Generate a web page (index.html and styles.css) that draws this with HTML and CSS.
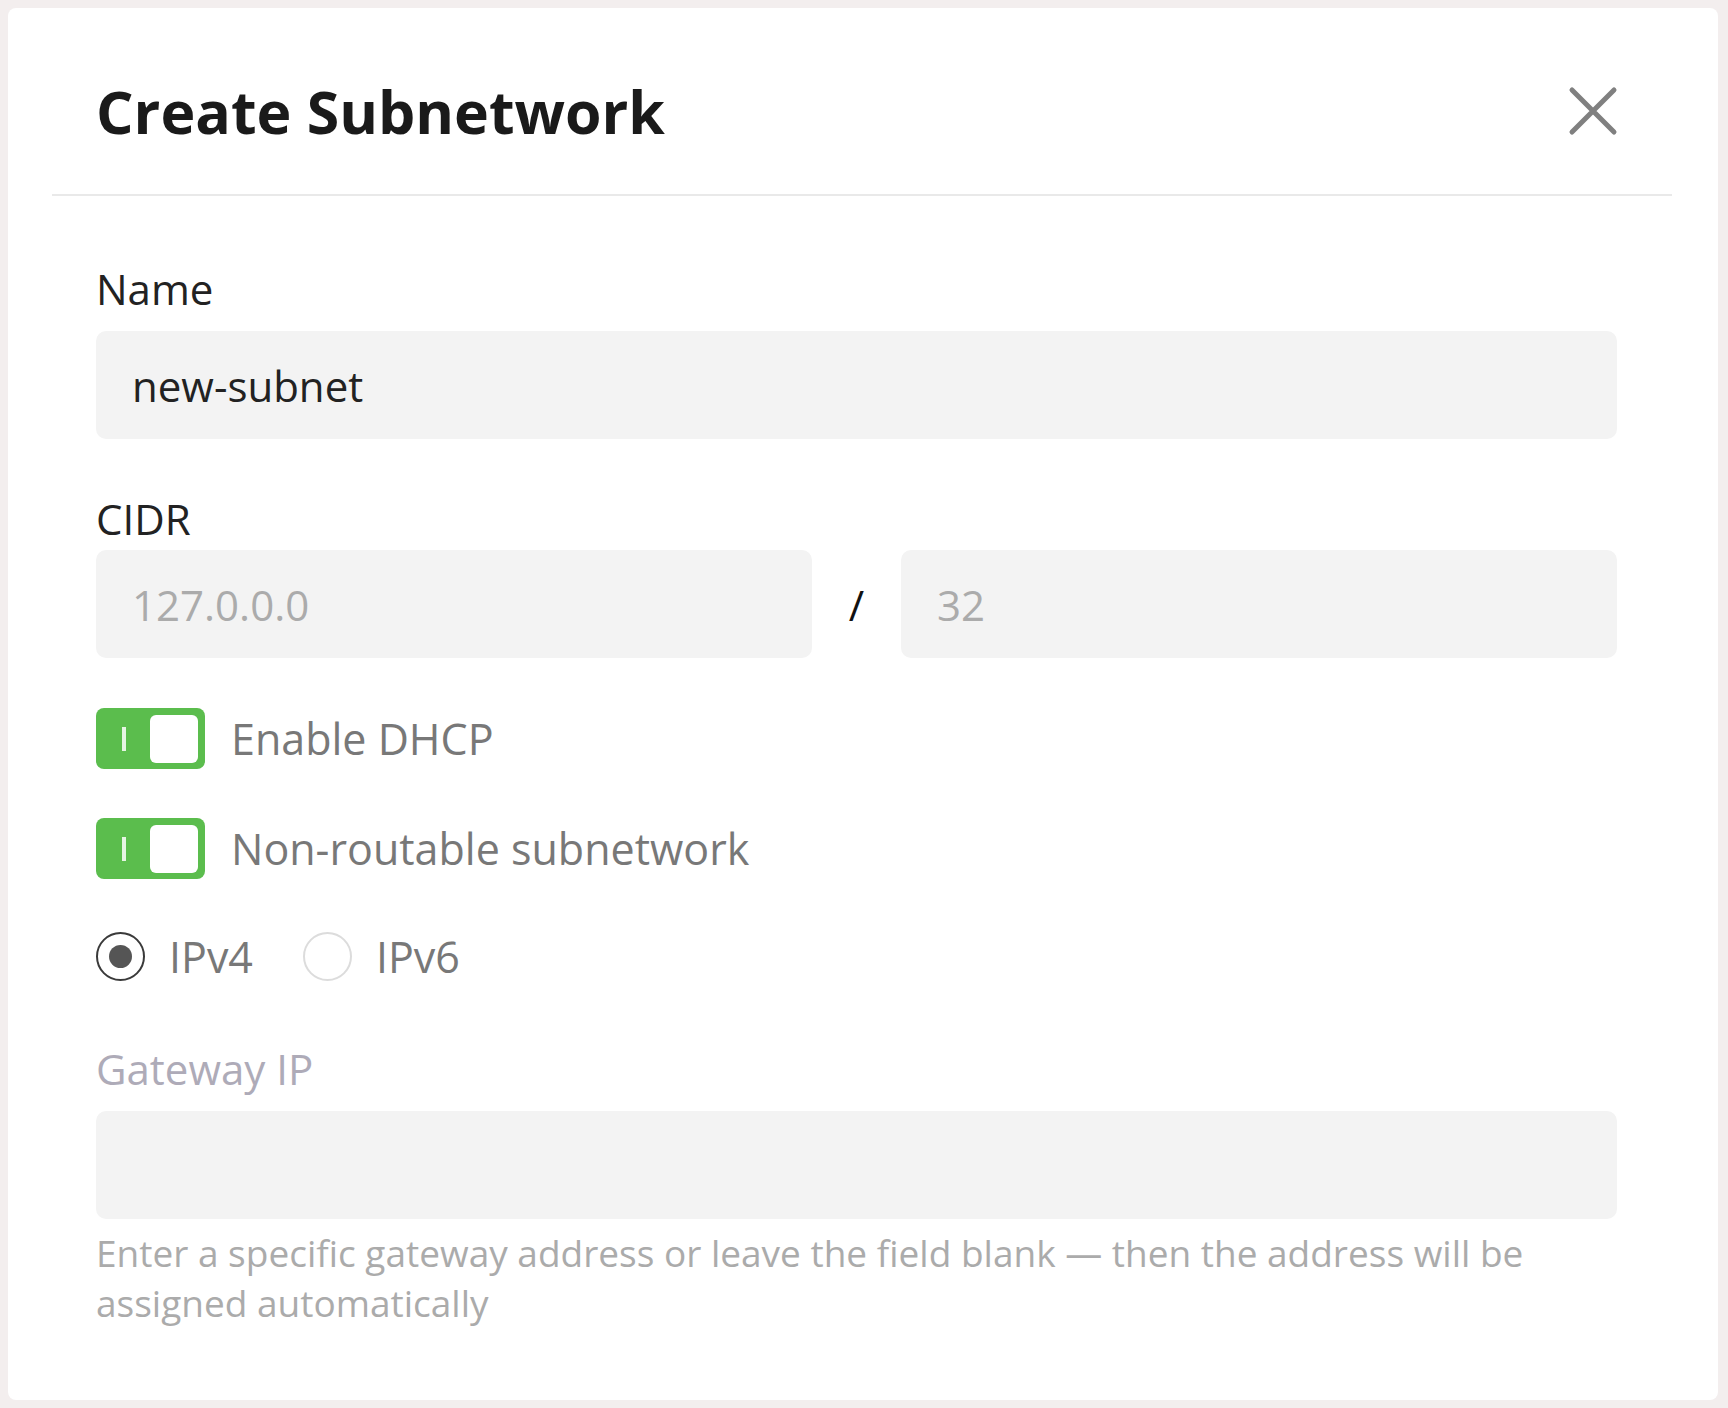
FILE: index.html
```html
<!DOCTYPE html>
<html lang="en">
<head>
<meta charset="utf-8">
<title>Create Subnetwork</title>
<link rel="stylesheet" href="styles.css">
</head>
<body>
<div class="card">
  <div class="header">
    <h1 class="title">Create Subnetwork</h1>
    <button class="close" aria-label="Close">
      <svg width="50" height="50" viewBox="0 0 50 50"><path d="M4 4 L46 46 M46 4 L4 46" stroke="#808080" stroke-width="5" stroke-linecap="round" fill="none"/></svg>
    </button>
  </div>
  <div class="body">
    <label class="label label-name">Name</label>
    <input class="field" type="text" value="new-subnet">

    <label class="label label-cidr">CIDR</label>
    <div class="cidr">
      <input class="field" type="text" placeholder="127.0.0.0">
      <span class="slash">/</span>
      <input class="field" type="text" placeholder="32">
    </div>

    <div class="switch-row first">
      <span class="toggle"><span class="mark"></span><span class="knob"></span></span>
      <span class="switch-label">Enable DHCP</span>
    </div>
    <div class="switch-row">
      <span class="toggle"><span class="mark"></span><span class="knob"></span></span>
      <span class="switch-label">Non-routable subnetwork</span>
    </div>

    <div class="radio-row">
      <span class="radio checked"><span class="dot"></span></span>
      <span class="radio-label">IPv4</span>
      <span class="radio"></span>
      <span class="radio-label">IPv6</span>
    </div>

    <label class="label label-gateway">Gateway IP</label>
    <input class="field" type="text">
    <p class="help">Enter a specific gateway address or leave the field blank — then the address will be assigned automatically</p>
  </div>
</div>
</body>
</html>
```

FILE: styles.css
```css
* { box-sizing: border-box; }
html, body { margin: 0; padding: 0; }
body {
  background: #f3eeee;
  width: 1728px;
  height: 1408px;
  padding: 8px 10px 8px 8px;
  font-family: "Open Sans", "Noto Sans", sans-serif;
}
.card {
  background: #ffffff;
  width: 1710px;
  height: 1392px;
  border-radius: 8px;
}
.header {
  margin: 0 46px 0 44px;
  height: 188px;
  padding: 20px 54px 0 44px;
  border-bottom: 2px solid #e9e9e9;
  display: flex;
  align-items: center;
  justify-content: space-between;
}
.title {
  margin: 0;
  font-size: 59px;
  font-weight: 700;
  color: #1a1a1a;
  line-height: 1.2;
}
.close {
  border: none;
  background: none;
  padding: 0;
  width: 50px;
  height: 50px;
  display: block;
}
.close svg { display: block; }
.body {
  margin-left: 88px;
  width: 1521px;
  display: flex;
  flex-direction: column;
}
.label {
  display: block;
  font-size: 42px;
  line-height: 50px;
  color: #222;
}
.label-name { margin-top: 68px; margin-bottom: 17px; }
.label-cidr { margin-top: 55px; margin-bottom: 6px; }
.label-gateway { margin-top: 63px; margin-bottom: 17px; color: #aeabb8; }
.field {
  display: block;
  width: 100%;
  height: 108px;
  border: none;
  outline: none;
  background: #f3f3f3;
  border-radius: 10px;
  padding: 0 36px;
  font-family: inherit;
  font-size: 42px;
  color: #222;
}
.field::placeholder { color: #ababab; }
.cidr {
  display: grid;
  grid-template-columns: 1fr 89px 1fr;
  align-items: center;
}
.slash {
  text-align: center;
  font-size: 42px;
  color: #111;
}
.switch-row {
  display: flex;
  align-items: center;
  gap: 26px;
  height: 61px;
  margin-top: 49px;
}
.switch-row.first { margin-top: 50px; }
.toggle {
  width: 109px;
  height: 61px;
  border-radius: 8px;
  background: #5bbd4d;
  display: flex;
  align-items: center;
  justify-content: space-between;
  padding: 0 7px 0 26px;
  flex: none;
}
.mark {
  width: 4px;
  height: 24px;
  background: rgba(255,255,255,0.85);
}
.knob {
  width: 48px;
  height: 48px;
  border-radius: 6px;
  background: #fff;
}
.switch-label {
  font-size: 43px;
  color: #787878;
}
.radio-row {
  display: flex;
  align-items: center;
  height: 49px;
  margin-top: 53px;
}
.radio {
  width: 49px;
  height: 49px;
  border-radius: 50%;
  border: 2px solid #dcdcdc;
  display: flex;
  align-items: center;
  justify-content: center;
  flex: none;
}
.radio.checked { border-color: #3a3a3a; }
.dot {
  width: 23px;
  height: 23px;
  border-radius: 50%;
  background: #555;
}
.radio-label {
  font-size: 43px;
  color: #787878;
  margin-left: 24px;
  margin-right: 50px;
}
.help {
  margin: 9px 0 0;
  font-size: 37px;
  line-height: 50px;
  color: #ababab;
}
```
